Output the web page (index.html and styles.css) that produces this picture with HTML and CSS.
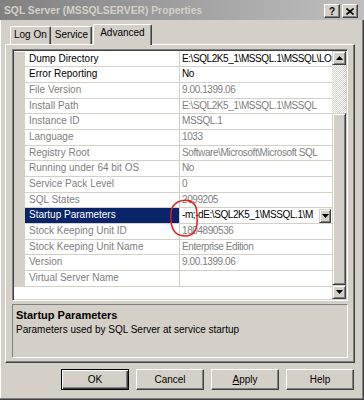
FILE: index.html
```html
<!DOCTYPE html>
<html lang="en">
<head>
  <meta charset="UTF-8">
  <title>SQL Server (MSSQLSERVER) Properties</title>
  <link rel="stylesheet" href="styles.css">
</head>
<body>
  <div class="dialog">
    <div class="titlebar">
      <span class="title">SQL Server (MSSQLSERVER) Properties</span>
      <div class="caption-btns">
        <span class="cap-btn help">?</span>
        <span class="cap-btn">
          <svg width="8" height="7" viewBox="0 0 8 7"><path d="M0.5 0.5L7.5 6.5M7.5 0.5L0.5 6.5" stroke="#000" stroke-width="1.6"/></svg>
        </span>
      </div>
    </div>

    <div class="content">
      <div class="tabs">
        <div class="tab">Log On</div>
        <div class="tab">Service</div>
        <div class="tab active">Advanced</div>
      </div>

      <div class="panel">
        <div class="grid">
          <div class="rows">
            <div class="row editable"><span class="gutter"></span><span class="name">Dump Directory</span><span class="value">E:\SQL2K5_1\MSSQL.1\MSSQL\LO</span></div>
            <div class="row editable"><span class="gutter"></span><span class="name">Error Reporting</span><span class="value">No</span></div>
            <div class="row"><span class="gutter"></span><span class="name">File Version</span><span class="value">9.00.1399.06</span></div>
            <div class="row"><span class="gutter"></span><span class="name">Install Path</span><span class="value">E:\SQL2K5_1\MSSQL.1\MSSQL</span></div>
            <div class="row"><span class="gutter"></span><span class="name">Instance ID</span><span class="value">MSSQL.1</span></div>
            <div class="row"><span class="gutter"></span><span class="name">Language</span><span class="value">1033</span></div>
            <div class="row"><span class="gutter"></span><span class="name">Registry Root</span><span class="value">Software\Microsoft\Microsoft SQL</span></div>
            <div class="row"><span class="gutter"></span><span class="name">Running under 64 bit OS</span><span class="value">No</span></div>
            <div class="row"><span class="gutter"></span><span class="name">Service Pack Level</span><span class="value">0</span></div>
            <div class="row"><span class="gutter"></span><span class="name">SQL States</span><span class="value">2099205</span></div>
            <div class="row editable selected">
              <span class="gutter"></span><span class="name">Startup Parameters</span>
              <span class="value combo">
                <span class="combo-text">-m;-dE:\SQL2K5_1\MSSQL.1\M</span>
                <span class="drop">
                  <svg width="7" height="4" viewBox="0 0 7 4"><path d="M0 0h7L3.5 4z" fill="#000"/></svg>
                </span>
              </span>
            </div>
            <div class="row"><span class="gutter"></span><span class="name">Stock Keeping Unit ID</span><span class="value">1804890536</span></div>
            <div class="row"><span class="gutter"></span><span class="name">Stock Keeping Unit Name</span><span class="value">Enterprise Edition</span></div>
            <div class="row"><span class="gutter"></span><span class="name">Version</span><span class="value">9.00.1399.06</span></div>
            <div class="row"><span class="gutter"></span><span class="name">Virtual Server Name</span><span class="value"></span></div>
          </div>

          <div class="scrollbar">
            <span class="sb-btn">
              <svg width="7" height="4" viewBox="0 0 7 4"><path d="M0 4h7L3.5 0z" fill="#000"/></svg>
            </span>
            <span class="sb-track"></span>
            <span class="sb-thumb"></span>
            <span class="sb-btn">
              <svg width="7" height="4" viewBox="0 0 7 4"><path d="M0 0h7L3.5 4z" fill="#000"/></svg>
            </span>
          </div>
        </div>

        <div class="desc">
          <div class="desc-title">Startup Parameters</div>
          <div class="desc-text">Parameters used by SQL Server at service startup</div>
        </div>
      </div>

      <div class="buttons">
        <span class="btn default">OK</span>
        <span class="btn">Cancel</span>
        <span class="btn"><u>A</u>pply</span>
        <span class="btn">Help</span>
      </div>
    </div>

    <!-- red hand-drawn mark around -m; -->
    <svg class="mark" width="364" height="400" viewBox="0 0 364 400">
      <path d="M191 201 C183 199 172 201 171 213 C170 226 173 236 185 236 C195 236 198 228 197 217 C197 208 196 203 189 201" fill="none" stroke="#e0201c" stroke-width="1.5"/>
    </svg>
  </div>
</body>
</html>
```

FILE: styles.css
```css
* {
  box-sizing: border-box;
}
body {
  margin: 0;
  font-family: "Liberation Sans", Arial, sans-serif;
  font-size: 10px;
  color: #000;
}
.dialog {
  position: relative;
  width: 364px;
  height: 400px;
  background: #d4d0c8;
  box-shadow: inset -1px -1px 0 #404040, inset -2px -2px 0 #808080, inset 1px 0 0 #fff;
}

/* caption */
.titlebar {
  height: 20px;
  display: flex;
  justify-content: space-between;
  align-items: center;
  padding: 0 6px 0 4px;
  background: linear-gradient(to right, #808080, #c0c0c0);
}
.title {
  color: #d4d0c8;
  font-weight: bold;
  font-size: 10.3px;
}
.caption-btns {
  display: flex;
  gap: 2px;
  margin-top: 2px;
}
.cap-btn {
  width: 16px;
  height: 14px;
  display: flex;
  align-items: center;
  justify-content: center;
  border: 1px solid;
  border-color: #fff #404040 #404040 #fff;
  box-shadow: inset -1px -1px 0 #808080;
  background: #d4d0c8;
  font-weight: bold;
  font-size: 10px;
}

.content {
  padding: 4px 9px 0 5px;
}

/* tabs */
.tabs {
  display: flex;
  align-items: flex-end;
  height: 20px;
  padding-left: 5px;
  position: relative;
  z-index: 1;
}
.tab {
  height: 18px;
  padding: 0 3px;
  line-height: 16px;
  border: 1px solid;
  border-color: #fff #404040 transparent #fff;
  border-bottom: none;
  border-radius: 2px 2px 0 0;
  box-shadow: inset -1px 0 0 #808080;
  background: #d4d0c8;
}
.tab + .tab {
  border-left-color: transparent;
}
.tab.active {
  height: 21px;
  margin-bottom: -1px;
  margin-left: 1px;
  padding: 0 6px;
  border-left-color: #fff;
}

/* tab page */
.panel {
  height: 319px;
  border: 1px solid;
  border-color: #fff #404040 #404040 #fff;
  box-shadow: inset -1px -1px 0 #808080;
  padding: 4px 6px 4px 6px;
  display: flex;
  flex-direction: column;
  gap: 3px;
}

/* property grid */
.grid {
  height: 252px;
  display: flex;
  background: #fff;
  border: 1px solid;
  border-color: #808080 #fff #fff #808080;
  box-shadow: inset 1px 1px 0 #404040, inset -1px -1px 0 #d4d0c8;
  padding: 1px;
}
.rows {
  flex: 1;
  min-width: 0;
  padding-top: 0.5px;
}
.row {
  display: flex;
  height: 15.7px;
}
.gutter {
  width: 11px;
  flex: none;
  background: #d4d0c8;
}
.name,
.value {
  line-height: 14.7px;
  white-space: nowrap;
  overflow: hidden;
  color: #808080;
  border-bottom: 1px solid #d4d0c8;
}
.name {
  width: 155px;
  flex: none;
  padding-left: 4px;
  border-right: 1px solid #d4d0c8;
}
.value {
  flex: 1;
  min-width: 0;
  padding-left: 2px;
  letter-spacing: -0.42px;
}
.row.editable .name,
.row.editable .value {
  color: #000;
}
.row.selected .name {
  background: #0a246a;
  color: #fff;
}
.value.combo {
  display: flex;
  align-items: center;
  padding-right: 1px;
}
.combo-text {
  flex: 1;
  min-width: 0;
  overflow: hidden;
}
.drop {
  width: 12px;
  height: 14px;
  flex: none;
  display: flex;
  align-items: center;
  justify-content: center;
  background: #d4d0c8;
  border: 1px solid;
  border-color: #d4d0c8 #404040 #404040 #d4d0c8;
  box-shadow: inset 1px 1px 0 #fff, inset -1px -1px 0 #808080;
}

/* scrollbar */
.scrollbar {
  width: 14px;
  flex: none;
  display: flex;
  flex-direction: column;
}
.sb-btn,
.sb-thumb {
  background: #d4d0c8;
  border: 1px solid;
  border-color: #d4d0c8 #404040 #404040 #d4d0c8;
  box-shadow: inset 1px 1px 0 #fff, inset -1px -1px 0 #808080;
}
.sb-btn {
  height: 14px;
  display: flex;
  align-items: center;
  justify-content: center;
}
.sb-track {
  height: 48px;
  background-image: conic-gradient(#fff 25%, #d4d0c8 0 50%, #fff 0 75%, #d4d0c8 0);
  background-size: 2px 2px;
}
.sb-thumb {
  height: 172px;
}

/* description pane */
.desc {
  height: 54px;
  border: 1px solid;
  border-color: #808080 #fff #fff #808080;
  padding: 3px 3px;
  line-height: 14px;
}
.desc-title {
  font-weight: bold;
  font-size: 11px;
}
.desc-text {
  line-height: 16px;
}

/* dialog buttons */
.buttons {
  display: flex;
  gap: 7px;
  padding-left: 56px;
  margin-top: 6px;
}
.btn {
  width: 68px;
  height: 21px;
  display: flex;
  align-items: center;
  justify-content: center;
  border: 1px solid;
  border-color: #fff #404040 #404040 #fff;
  box-shadow: inset -1px -1px 0 #808080;
}
.btn.default {
  border-color: #000;
  box-shadow: inset 1px 1px 0 #fff, inset -1px -1px 0 #404040, inset -2px -2px 0 #808080;
}

.mark {
  position: absolute;
  left: 0;
  top: 0;
  pointer-events: none;
}
```
